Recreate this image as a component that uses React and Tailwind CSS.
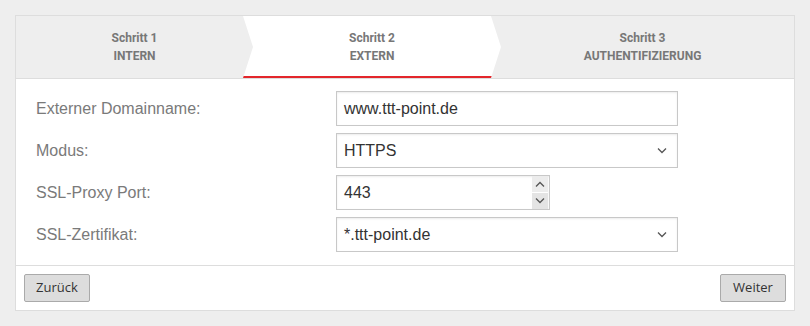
import React from 'react';

function Chevron({ up = false, className = '' }) {
  return (
    <svg width="10" height="6" viewBox="0 0 10 6" className={className}>
      <path
        d={up ? 'M1 5.5 L5 1.5 L9 5.5' : 'M1 0.5 L5 4.5 L9 0.5'}
        fill="none"
        stroke="#555"
        strokeWidth="1.3"
      />
    </svg>
  );
}

function Field({ label, children }) {
  return (
    <div className="flex items-center h-[35px]">
      <label className="w-[320px] pl-[20px] text-[16px] text-[#7a7a7a]">{label}</label>
      {children}
    </div>
  );
}

const box =
  'h-[35px] border border-[#c8c8c8] bg-white shadow-[inset_0_1px_2px_rgba(0,0,0,0.08)] px-[7px] flex items-center text-[16px] text-[#333]';

const tabText =
  "flex flex-col items-center justify-center text-[12px] font-bold text-[#777] leading-[18px] font-['Roboto',sans-serif]";

function App() {
  return (
    <div className="min-h-[326px] bg-[#eeeeee] px-[15px] pt-[15px] font-['Liberation_Sans',Arial,sans-serif]">
      <div className="w-[780px] border border-[#dddddd] bg-white">
        <div className="flex h-[63px] bg-[#eeeeee] border-b border-[#dddddd]">
          <div className={`w-[227px] pl-[10px] ${tabText}`}>
            <span>Schritt 1</span>
            <span>INTERN</span>
          </div>
          <div className={`w-[258px] bg-white border-b-2 border-[#e3262b] ${tabText} [clip-path:polygon(0_0,248px_0,100%_50%,248px_100%,0_100%,10px_50%)]`}>
            <span className="mt-[2px]">Schritt 2</span>
            <span>EXTERN</span>
          </div>
          <div className={`flex-1 pr-[10px] ${tabText}`}>
            <span>Schritt 3</span>
            <span>AUTHENTIFIZIERUNG</span>
          </div>
        </div>

        <div className="pt-[12px] pb-[13px] flex flex-col gap-[7px]">
          <Field label="Externer Domainname:">
            <div className={`${box} w-[342px]`}>www.ttt-point.de</div>
          </Field>
          <Field label="Modus:">
            <div className={`${box} w-[342px] justify-between pr-[10px]`}>
              <span>HTTPS</span>
              <Chevron />
            </div>
          </Field>
          <Field label="SSL-Proxy Port:">
            <div className={`${box} w-[214px] justify-between pr-[1px]`}>
              <span>443</span>
              <div className="flex flex-col w-[16px] h-[33px] gap-[1px]">
                <div className="flex-1 bg-[#ececec] flex items-center justify-center">
                  <Chevron up />
                </div>
                <div className="flex-1 bg-[#e4e4e4] flex items-center justify-center">
                  <Chevron />
                </div>
              </div>
            </div>
          </Field>
          <Field label="SSL-Zertifikat:">
            <div className={`${box} w-[342px] justify-between pr-[10px]`}>
              <span>*.ttt-point.de</span>
              <Chevron />
            </div>
          </Field>
        </div>

        <div className="border-t border-[#dddddd] h-[45px] px-[8px] flex items-center justify-between font-['Open_Sans',sans-serif]">
          <button className="h-[28px] w-[66px] bg-[#dddddd] border border-[#aaaaaa] rounded-[2px] text-[13px] text-[#333]">
            Zurück
          </button>
          <button className="h-[28px] w-[66px] bg-[#dddddd] border border-[#aaaaaa] rounded-[2px] text-[13px] text-[#333]">
            Weiter
          </button>
        </div>
      </div>
    </div>
  );
}

export default App;
